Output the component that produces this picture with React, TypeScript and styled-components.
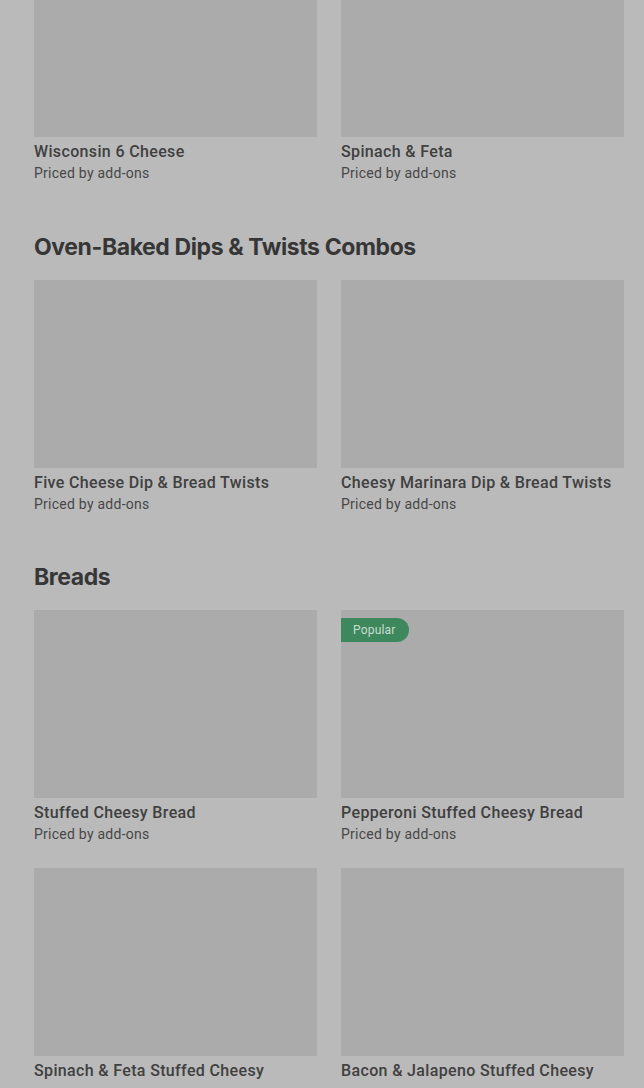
import styled, { createGlobalStyle } from "styled-components";

interface Item {
   name: string;
   popular?: boolean;
}

interface Section {
   title?: string;
   items: Item[];
}

const sections: Section[] = [
   {
      items: [{ name: "Wisconsin 6 Cheese" }, { name: "Spinach & Feta" }],
   },
   {
      title: "Oven-Baked Dips & Twists Combos",
      items: [{ name: "Five Cheese Dip & Bread Twists" }, { name: "Cheesy Marinara Dip & Bread Twists" }],
   },
   {
      title: "Breads",
      items: [
         { name: "Stuffed Cheesy Bread" },
         { name: "Pepperoni Stuffed Cheesy Bread", popular: true },
         { name: "Spinach & Feta Stuffed Cheesy Bread" },
         { name: "Bacon & Jalapeno Stuffed Cheesy Bread" },
      ],
   },
];

const App = () => {
   return (
      <>
         <GlobalStyle />
         <Page>
            {sections.map((section, i) => (
               <MenuSection key={i}>
                  {section.title && <SectionTitle>{section.title}</SectionTitle>}
                  <Grid>
                     {section.items.map((item) => (
                        <Card key={item.name}>
                           <Thumb>{item.popular && <Badge>Popular</Badge>}</Thumb>
                           <ItemName>{item.name}</ItemName>
                           <ItemPrice>Priced by add-ons</ItemPrice>
                        </Card>
                     ))}
                  </Grid>
               </MenuSection>
            ))}
         </Page>
      </>
   );
};

export default App;

const GlobalStyle = createGlobalStyle`
   html, body {
      margin: 0;
      padding: 0;
      background: #bababa;
      overflow: hidden;
   }
   * {
      box-sizing: border-box;
   }
`;

const Page = styled.div`
   width: 644px;
   height: 1088px;
   overflow: hidden;
   padding: 0 20px 0 34px;
   background: #bababa;
   font-family: Roboto, "Liberation Sans", sans-serif;
`;

const MenuSection = styled.section`
   display: flex;
   flex-direction: column;
   gap: 17px;
   margin-bottom: 47px;

   &:first-child {
      margin-top: -51px;
      margin-bottom: 48px;
   }
`;

const SectionTitle = styled.h2`
   margin: 0;
   height: 32px;
   line-height: 32px;
   font-family: Inter, "Noto Sans", sans-serif;
   font-size: 23px;
   font-weight: 700;
   letter-spacing: -0.4px;
   color: #363636;
`;

const Grid = styled.div`
   display: grid;
   grid-template-columns: 283px 283px;
   column-gap: 24px;
   row-gap: 24px;
`;

const Card = styled.div`
   display: flex;
   flex-direction: column;
`;

const Thumb = styled.div`
   position: relative;
   height: 188px;
   background: #ababab;
   margin-bottom: 3px;
`;

const Badge = styled.span`
   position: absolute;
   top: 8px;
   left: 0;
   height: 24px;
   padding: 0 13px 1px 12px;
   display: flex;
   align-items: center;
   border-radius: 0 12px 12px 0;
   background: #3d885d;
   color: #c9dcd0;
   font-size: 12px;
   letter-spacing: 0.2px;
`;

const ItemName = styled.div`
   padding-right: 8px;
   font-size: 16px;
   font-weight: 500;
   line-height: 24px;
   letter-spacing: 0.35px;
   color: #404040;
`;

const ItemPrice = styled.div`
   font-size: 14px;
   line-height: 20px;
   letter-spacing: 0.25px;
   color: #474747;
   margin-top: -1px;
`;
